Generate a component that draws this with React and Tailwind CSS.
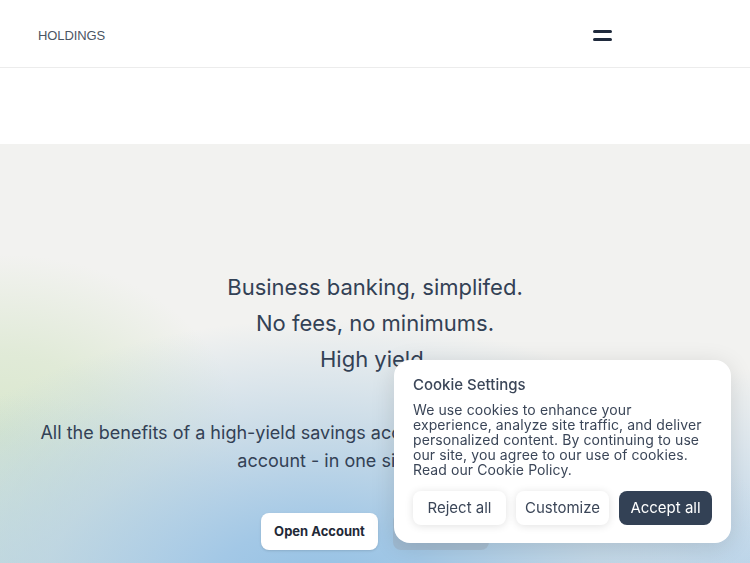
import React from "react";

export default function App() {
  const font = { fontFamily: "Inter, 'Noto Sans', sans-serif" };
  return (
    <div className="relative h-screen bg-white overflow-hidden">
      <header className="h-[68px] border-b border-[#ececec] flex items-center justify-between pt-[3px] pl-[38px] pr-[138px] bg-white">
        <span className="mt-[2px] text-[13px] text-[#4b5563] tracking-[-0.1px]" style={{ fontFamily: "'Liberation Sans', Arial, sans-serif" }}>
          HOLDINGS
        </span>
        <button className="flex flex-col gap-[5px] w-[19px]">
          <span className="block h-[3px] w-[19px] rounded-full bg-[#1f2a3c]"></span>
          <span className="block h-[3px] w-[19px] rounded-full bg-[#1f2a3c]"></span>
        </button>
      </header>
      <div className="h-[76px] bg-white"></div>
      <section
        className="h-[500px] bg-[#f2f2f0] bg-[radial-gradient(ellipse_62%_55%_at_43%_90%,#93c0e4_0%,#a3c8e6_25%,rgba(185,210,228,0.7)_60%,rgba(242,242,240,0)_100%),radial-gradient(ellipse_45%_45%_at_0%_95%,#bdd8d7_0%,rgba(189,216,215,0.5)_50%,rgba(189,216,215,0)_100%),radial-gradient(ellipse_32%_36%_at_0%_58%,#d9e7cd_0%,rgba(217,231,205,0.7)_45%,rgba(242,242,240,0)_100%),radial-gradient(ellipse_45%_40%_at_100%_85%,#bcd5ea_0%,rgba(188,213,234,0)_100%)] pt-[125px] flex flex-col items-center text-[#334155]"
        style={font}
      >
        <h1 className="text-[22px] leading-[36px] text-center font-normal">
          <div>Business banking, simplifed.</div>
          <div>No fees, no minimums.</div>
          <div>High yield.</div>
        </h1>
        <p className="mt-[42px] text-[18px] leading-[28px] text-center whitespace-nowrap">
          <span className="block">All the benefits of a high-yield savings account and the flexibility of a checking</span>
          <span className="block">account - in one single platform.</span>
        </p>
        <div className="mt-[38px] flex gap-[15px]">
          <button className="h-[37px] w-[117px] rounded-lg bg-white text-[13px] font-bold text-[#1f2937] shadow-sm">
            Open Account
          </button>
          <button className="h-[37px] w-[96px] rounded-lg bg-[#9aa7b3]/40 text-[13px] font-bold text-[#1f2937]">
            Learn More
          </button>
        </div>
      </section>

      <div
        className="fixed right-[19px] bottom-[20px] w-[337px] rounded-2xl bg-white shadow-[0_4px_24px_rgba(0,0,0,0.12)] pt-[13px] pb-[18px] px-[19px] text-[#3b4658]"
        style={font}
      >
        <h2 className="text-[15px] leading-[24px] font-medium">Cookie Settings</h2>
        <p className="mt-[5px] text-[14px] leading-[15px] tracking-[0.1px] whitespace-nowrap">
          <span className="block">We use cookies to enhance your</span>
          <span className="block">experience, analyze site traffic, and deliver</span>
          <span className="block">personalized content. By continuing to use</span>
          <span className="block">our site, you agree to our use of cookies.</span>
          <span className="block">Read our Cookie Policy.</span>
        </p>
        <div className="mt-[14px] flex gap-[10px]">
          <button className="h-[34px] w-[93px] rounded-lg bg-white text-[15px] text-[#3b4658] shadow-[0_1px_8px_rgba(0,0,0,0.12)]">
            Reject all
          </button>
          <button className="h-[34px] w-[93px] rounded-lg bg-white text-[15px] text-[#3b4658] shadow-[0_1px_8px_rgba(0,0,0,0.12)]">
            Customize
          </button>
          <button className="h-[34px] w-[93px] rounded-lg bg-[#334155] text-[15px] text-white">
            Accept all
          </button>
        </div>
      </div>
    </div>
  );
}
